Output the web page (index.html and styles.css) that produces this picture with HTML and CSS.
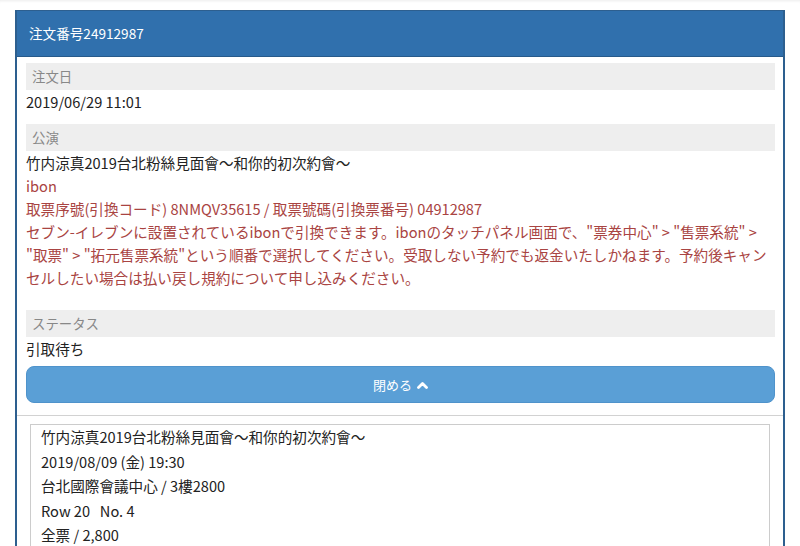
FILE: index.html
```html
<!DOCTYPE html>
<html lang="ja">
<head>
    <meta charset="UTF-8">
    <meta name="viewport" content="width=device-width, initial-scale=1.0">
    <title>注文詳細</title>
    <link rel="stylesheet" href="styles.css">
</head>
<body>

    <!-- 注文パネル -->
    <div class="order-panel">
        <div class="order-head">注文番号24912987</div>

        <div class="order-body">
            <dl class="order-info">
                <dt>注文日</dt>
                <dd>2019/06/29 11:01</dd>

                <dt>公演</dt>
                <dd>
                    竹内涼真2019台北粉絲見面會～和你的初次約會～
                    <div class="pickup">
                        ibon<br>
                        取票序號(引換コード) 8NMQV35615 / 取票號碼(引換票番号) 04912987<br>
                        セブン-イレブンに設置されているibonで引換できます。ibonのタッチパネル画面で、"票券中心" &gt; "售票系統" &gt; "取票" &gt; "拓元售票系統"という順番で選択してください。受取しない予約でも返金いたしかねます。予約後キャンセルしたい場合は払い戻し規約について申し込みください。
                    </div>
                </dd>

                <dt>ステータス</dt>
                <dd>引取待ち</dd>
            </dl>

            <button class="toggle-btn">閉める
                <svg class="chevron" width="11" height="8" viewBox="0 0 11 8">
                    <polyline points="1.5,6.5 5.5,2.5 9.5,6.5" fill="none" stroke="#fff" stroke-width="2.8" stroke-linecap="round" stroke-linejoin="round"/>
                </svg>
            </button>
        </div>

        <!-- チケット一覧 -->
        <div class="ticket-list">
            <div class="ticket">
                <p>竹内涼真2019台北粉絲見面會～和你的初次約會～</p>
                <p>2019/08/09 (金) 19:30</p>
                <p>台北國際會議中心 / 3樓2800</p>
                <p>Row 20&nbsp;&nbsp; No. 4</p>
                <p>全票 / 2,800</p>
            </div>
        </div>
    </div>

</body>
</html>
```

FILE: styles.css
```css
body {
    font-family: "Noto Sans CJK TC", "Noto Sans CJK JP", sans-serif;
    margin: 0;
    padding: 0;
    background-color: #fff;
    color: #333;
    box-shadow: inset 0 3px 3px -2px rgba(0, 0, 0, 0.08);
    min-height: 546px;
}
.order-panel {
    margin: 10px 15px 0;
    border-left: 2px solid #2d5f8f;
    border-right: 2px solid #2d5f8f;
    border-top: 1px solid #2d5f8f;
}
.order-head {
    background-color: #3070ad;
    color: #fff;
    font-size: 13.6px;
    height: 45px;
    line-height: 45px;
    padding: 0 12px;
    border-bottom: 1px solid #275a8a;
}
.order-body {
    padding: 0 8px 12px 9px;
    border-bottom: 1px solid #d2d2d2;
}
.order-info {
    margin: 0;
}
.order-info dt {
    background-color: #eee;
    color: #888;
    font-size: 13.4px;
    height: 27px;
    line-height: 27px;
    padding: 0 6px;
    margin-top: 11px;
}
.order-info dt:first-child {
    margin-top: 6px;
}
.order-info dd {
    margin: 0;
    font-size: 14.6px;
    line-height: 23px;
    color: #222;
}
.pickup {
    color: #a94442;
    padding-bottom: 10px;
}
.toggle-btn {
    display: flex;
    align-items: center;
    justify-content: center;
    gap: 5px;
    width: 100%;
    height: 37px;
    margin-top: 6px;
    background-color: #5a9fd6;
    border: 1px solid #4f93cb;
    border-radius: 8px;
    color: #fff;
    font-family: inherit;
    font-size: 13px;
    padding: 0;
}
.ticket-list {
    padding: 8px 13px 0;
}
.ticket {
    border: 1px solid #ccc;
    padding: 0 10px;
    height: 140px;
}
.ticket p {
    margin: 0;
    font-size: 14.6px;
    line-height: 24.5px;
    color: #222;
}
```
